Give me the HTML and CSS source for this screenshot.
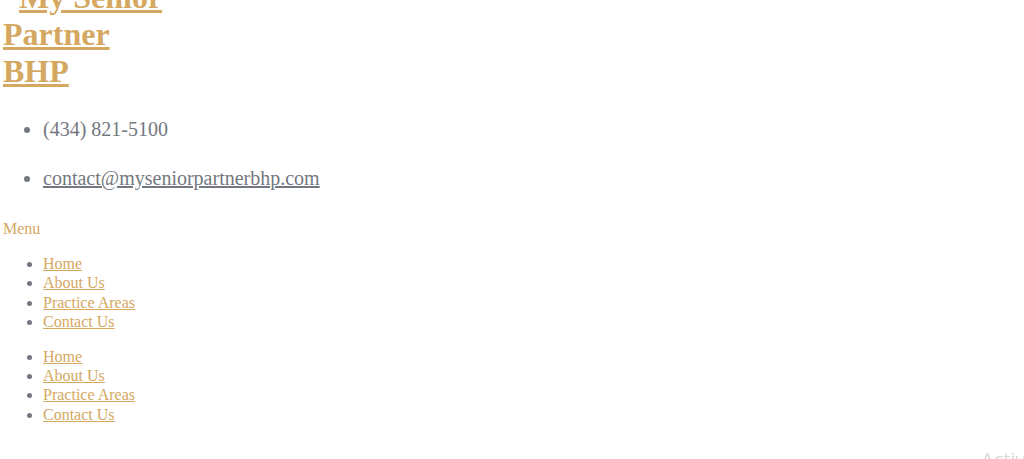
FILE: index.html
```html
<!DOCTYPE html>
<html lang="en">
<head>
    <meta charset="UTF-8">
    <meta name="viewport" content="width=device-width, initial-scale=1.0">
    <title>My Senior Partner BHP</title>
    <link rel="stylesheet" href="styles.css">
</head>
<body>
    <!-- Site title -->
    <h1 class="site-title"><a href="#">My Senior<br>Partner<br>BHP</a></h1>

    <!-- Contact info -->
    <ul class="contact-list">
        <li>(434) 821-5100</li>
        <li><a href="#">contact@myseniorpartnerbhp.com</a></li>
    </ul>

    <div class="menu-label">Menu</div>

    <ul class="nav-list">
        <li><a href="#">Home</a></li>
        <li><a href="#">About Us</a></li>
        <li><a href="#">Practice Areas</a></li>
        <li><a href="#">Contact Us</a></li>
    </ul>

    <ul class="nav-list">
        <li><a href="#">Home</a></li>
        <li><a href="#">About Us</a></li>
        <li><a href="#">Practice Areas</a></li>
        <li><a href="#">Contact Us</a></li>
    </ul>

    <div class="activate">Activate Windows</div>
</body>
</html>
```

FILE: styles.css
```css
body {
    font-family: "Liberation Serif", "Times New Roman", serif;
    margin: 0;
    padding: 0 3px;
    background-color: #ffffff;
    color: #737880;
}
a {
    color: #d5a862;
}
.site-title {
    font-size: 32px;
    font-weight: bold;
    margin: -21px 0 0 0;
    text-indent: 16px;
}
.site-title a {
    color: #d5a862;
}
.contact-list {
    margin: 15px 0 16px 0;
    padding-left: 40px;
    font-size: 20px;
    line-height: 49px;
}
.contact-list a {
    color: #737880;
}
.menu-label {
    font-size: 16px;
    line-height: 19.2px;
    color: #d5a862;
}
.nav-list {
    margin: 16px 0;
    padding-left: 40px;
    font-size: 16px;
    line-height: 19.2px;
}
.activate {
    position: fixed;
    left: 981px;
    top: 446px;
    font-family: "Open Sans", "Noto Sans", sans-serif;
    font-size: 20px;
    color: #d9d9d9;
    white-space: nowrap;
}
```
